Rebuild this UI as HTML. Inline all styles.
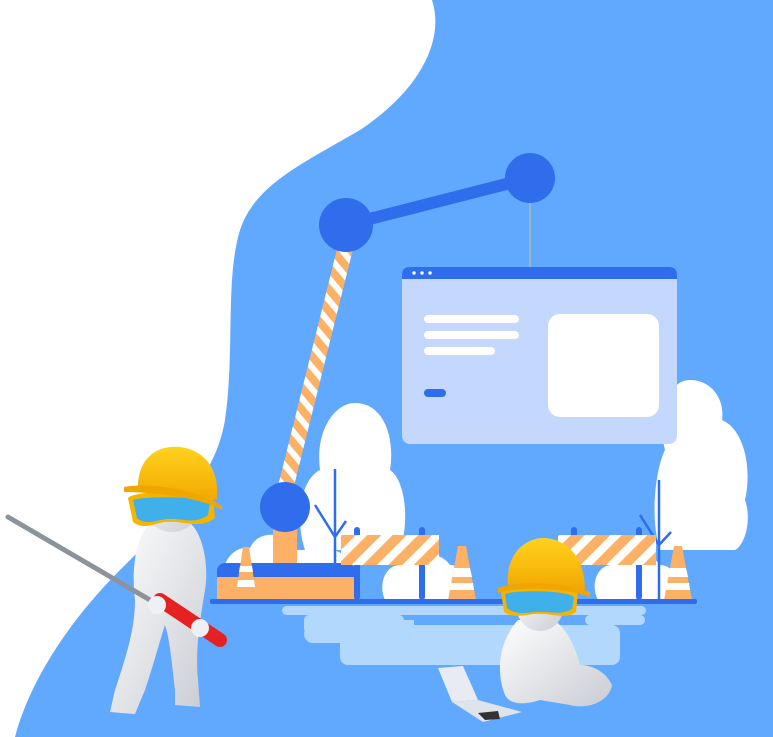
<!DOCTYPE html>
<html><head><meta charset="utf-8"><style>
html,body{margin:0;padding:0;background:#fff;}
svg{display:block}
</style></head><body>
<svg width="773" height="737" viewBox="0 0 773 737" xmlns="http://www.w3.org/2000/svg">
<defs>
<pattern id="st" width="18" height="18" patternUnits="userSpaceOnUse" patternTransform="rotate(45)">
<rect width="18" height="18" fill="#fdb166"/><rect width="8" height="18" fill="#fff"/>
</pattern>
<pattern id="st2" width="14" height="14" patternUnits="userSpaceOnUse" patternTransform="rotate(-40)">
<rect width="14" height="14" fill="#fdb166"/><rect width="6" height="14" fill="#fff"/>
</pattern>
<linearGradient id="body" x1="0" y1="0" x2="1" y2="1"><stop offset="0" stop-color="#ffffff"/><stop offset="1" stop-color="#c9ccd3"/></linearGradient>
<linearGradient id="hat" x1="0" y1="0" x2="0" y2="1"><stop offset="0" stop-color="#ffd21f"/><stop offset="1" stop-color="#f2a800"/></linearGradient>
</defs>
<rect width="773" height="737" fill="#fff"/>
<path d="M432 0 C445 40 420 90 360 130 C300 165 255 185 240 230 C225 280 235 350 225 420 C215 480 170 520 120 570 C70 620 30 680 15 737 L773 737 L773 0 Z" fill="#60a9fe"/>
<path d="M305 550 C295 520 300 480 320 470 C315 430 335 403 355 403 C385 403 395 440 390 470 C405 480 410 520 400 550 Z" fill="#fff"/>
<path d="M660 550 C650 520 655 470 665 450 C655 410 670 380 690 380 C712 380 725 400 722 420 C745 430 752 470 745 500 C752 520 745 545 735 550 Z" fill="#fff"/>
<path d="M225 600 C215 570 230 545 250 548 C258 530 285 530 292 550 L330 550 C350 550 355 575 350 600 Z" fill="#fff"/>
<path d="M385 600 C378 585 385 565 400 565 C410 550 440 550 450 565 C465 565 472 585 465 600 Z" fill="#fff"/>
<path d="M598 600 C590 585 597 565 612 565 C620 550 650 550 660 565 C675 565 682 585 675 600 Z" fill="#fff"/>
<g stroke="#2f6ded" stroke-width="2.5" fill="none">
<path d="M335 600 V469 M315 505 L335 537 L346 521"/>
<path d="M659 600 V480 M640 515 L659 545 L671 532"/>
</g>
<path d="M346 225 L530 178" stroke="#2f6ded" stroke-width="12" stroke-linecap="round"/>
<line x1="530" y1="190" x2="530" y2="268" stroke="#b0b4bc" stroke-width="1.5"/>
<path d="M338 245 L354 245 L293 490 L277 490 Z" fill="url(#st2)"/>
<circle cx="346" cy="225" r="27" fill="#2f6ded"/>
<circle cx="530" cy="178" r="25" fill="#2f6ded"/>
<rect x="273" y="515" width="24" height="50" fill="#fdb166"/>
<circle cx="285" cy="507" r="25" fill="#2f6ded"/>
<rect x="217" y="563" width="138" height="37" rx="8" fill="#2f6ded"/>
<rect x="217" y="577" width="138" height="23" fill="#fdb166"/>
<rect x="402" y="267" width="275" height="177" rx="8" fill="#c4d8fe"/>
<path d="M402 279 V275 Q402 267 410 267 H669 Q677 267 677 275 V279 Z" fill="#2f6ded"/>
<circle cx="414" cy="273" r="1.7" fill="#fff"/><circle cx="422" cy="273" r="1.7" fill="#fff"/><circle cx="430" cy="273" r="1.7" fill="#fff"/>
<rect x="424" y="315" width="95" height="8" rx="4" fill="#fff"/>
<rect x="424" y="331" width="95" height="8" rx="4" fill="#fff"/>
<rect x="424" y="347" width="71" height="8" rx="4" fill="#fff"/>
<rect x="424" y="389" width="22" height="8" rx="4" fill="#2f6ded"/>
<rect x="548" y="314" width="111" height="103" rx="12" fill="#fff"/>
<g fill="#2f6ded">
<rect x="354" y="527" width="6" height="73" rx="3"/><rect x="419" y="527" width="6" height="73" rx="3"/>
<rect x="571" y="527" width="6" height="73" rx="3"/><rect x="636" y="527" width="6" height="73" rx="3"/>
</g>
<rect x="341" y="535" width="98" height="30" fill="url(#st)"/>
<rect x="558" y="535" width="98" height="30" fill="url(#st)"/>
<path d="M243 547 L249 547 L257 600 L235 600 Z" fill="#fdb166"/>
<path d="M240 566 L252 566 L253 572 L239 572 Z M238 580 L254 580 L255 587 L237 587 Z" fill="#fff"/>
<path d="M458 546 L466 546 L476 600 L448 600 Z" fill="#fdb166"/>
<path d="M454 568 L470 568 L472 577 L452 577 Z M451 583 L473 583 L474 590 L450 590 Z" fill="#fff"/>
<path d="M674 546 L682 546 L692 600 L664 600 Z" fill="#fdb166"/>
<path d="M670 568 L686 568 L688 577 L668 577 Z M667 583 L689 583 L690 590 L666 590 Z" fill="#fff"/>
<rect x="210" y="599" width="487" height="5" rx="2" fill="#2f6ded"/>
<g fill="#b3d8fd">
<rect x="282" y="606" width="364" height="9" rx="4.5"/>
<rect x="304" y="615" width="100" height="10" rx="5"/>
<rect x="585" y="615" width="60" height="10" rx="5"/>
<rect x="304" y="620" width="110" height="10"/>
<rect x="304" y="625" width="110" height="18" rx="9"/>
<rect x="340" y="625" width="280" height="40" rx="8"/>
<rect x="560" y="625" width="60" height="20" rx="10"/>
<rect x="355" y="655" width="230" height="10" rx="5"/>
</g>
<g>
<path d="M160 520 C140 520 130 560 135 600 C135 630 125 660 115 690 L110 712 L135 714 L145 690 C155 660 160 640 165 625 C170 640 172 665 175 690 L175 705 L200 707 L198 680 C195 650 200 620 205 590 C210 560 200 525 185 520 Z" fill="url(#body)"/>
<ellipse cx="172" cy="500" rx="30" ry="32" fill="url(#body)"/>
<path d="M8 517 L150 600" stroke="#8d939b" stroke-width="5" stroke-linecap="round"/>
<path d="M160 600 L220 640" stroke="#e52221" stroke-width="14" stroke-linecap="round"/>
<circle cx="157" cy="605" r="9" fill="#eef0f3"/>
<circle cx="200" cy="628" r="9" fill="#eef0f3"/>
<path d="M128 498 C135 490 200 490 213 497 L215 518 C200 530 180 520 170 522 C160 520 145 532 133 522 Z" fill="#f5b400"/>
<path d="M133 500 C145 496 200 496 210 503 L208 515 C195 525 180 518 170 519 C160 518 148 527 137 518 Z" fill="#3fb0ea"/>
<path d="M138 488 C138 455 160 445 180 447 C205 450 220 470 217 500 C190 492 160 490 138 488 Z" fill="url(#hat)"/>
<path d="M124 487 C150 482 200 490 222 506 L222 510 C200 497 150 492 124 492 Z" fill="#f0a600"/>
</g>
<g>
<path d="M518 620 C500 640 495 670 505 695 C510 705 525 705 540 700 L570 705 C590 710 610 700 612 685 C605 670 590 665 580 665 C575 645 565 625 550 618 Z" fill="url(#body)"/>
<ellipse cx="540" cy="605" rx="24" ry="26" fill="url(#body)"/>
<path d="M438 668 L463 666 L478 700 L452 702 Z" fill="#e8ecf2"/>
<path d="M452 702 L478 700 L522 712 L483 722 Z" fill="#dfe3ea"/>
<path d="M478 713 L498 711 L500 719 L485 720 Z" fill="#333"/>
<path d="M501 592 C505 585 570 585 578 592 L576 612 C565 620 550 613 540 614 C528 613 515 620 504 612 Z" fill="#f5b400"/>
<path d="M505 594 C515 590 565 590 574 597 L572 609 C560 616 550 611 540 612 C530 611 518 617 507 608 Z" fill="#3fb0ea"/>
<path d="M508 585 C505 555 525 537 545 538 C570 540 585 560 585 590 C560 584 530 582 508 585 Z" fill="url(#hat)"/>
<path d="M498 588 C520 580 565 582 590 592 L590 597 C565 588 520 586 498 593 Z" fill="#f0a600"/>
</g>
</svg>
</body></html>
